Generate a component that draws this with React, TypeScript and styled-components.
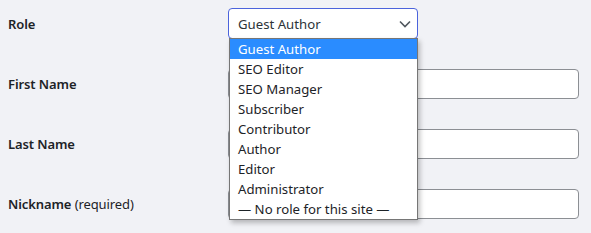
import React from 'react'
import styled, { createGlobalStyle } from 'styled-components'

const GlobalStyle = createGlobalStyle`
  html, body {
    margin: 0;
    padding: 0;
    background: #f1f2f6;
    overflow: hidden;
  }
  body {
    font-family: 'Noto Sans', 'Liberation Sans', sans-serif;
    color: #1d2327;
  }
`

const Page = styled.div`
  width: 591px;
  height: 233px;
  overflow: hidden;
`

const FormTable = styled.div`
  margin-top: -6px;
  padding-left: 8px;
  display: flex;
  flex-direction: column;
`

const Row = styled.div`
  display: grid;
  grid-template-columns: 220px 351px;
  align-items: center;
  height: 60px;
`

const Label = styled.label`
  font-size: 13px;
  font-weight: 600;
  color: #1d2327;
  letter-spacing: -0.1px;
`

const Hint = styled.span`
  font-weight: 400;
`

const SelectWrap = styled.div`
  position: relative;
  width: 190px;
  z-index: 2;
  align-self: start;
  margin-top: 14px;
`

const SelectBox = styled.div`
  height: 31px;
  box-sizing: border-box;
  border: 1.5px solid #4b63dc;
  border-radius: 4px;
  background: #fff;
  display: flex;
  align-items: center;
  justify-content: space-between;
  padding: 0 7px 0 9px;
  font-size: 13.2px;
  color: #2c3338;
`

const Chevron = styled.svg`
  width: 12px;
  height: 8px;
  margin-right: -1px;
`

const Menu = styled.ul`
  position: absolute;
  top: 30px;
  left: 1px;
  width: 189px;
  box-sizing: border-box;
  margin: 0;
  padding: 0;
  list-style: none;
  background: #fff;
  border: 1px solid #767676;
  box-shadow: 2px 3px 5px rgba(0, 0, 0, 0.25);
`

const Option = styled.li<{ $active?: boolean }>`
  height: 20px;
  line-height: 20px;
  padding-left: 8px;
  font-size: 13.2px;
  color: ${p => (p.$active ? '#fff' : '#1d2327')};
  background: ${p => (p.$active ? '#2a8cff' : 'transparent')};
  white-space: nowrap;
`

const TextInput = styled.input`
  width: 351px;
  height: 30px;
  box-sizing: border-box;
  border: 1px solid #8c8f94;
  border-radius: 4px;
  background: #fff;
  margin: 0;
  padding: 0 8px;
`

const roles = [
  'Guest Author',
  'SEO Editor',
  'SEO Manager',
  'Subscriber',
  'Contributor',
  'Author',
  'Editor',
  'Administrator',
  '— No role for this site —',
]

const App: React.FC = () => {
  return (
    <Page>
      <GlobalStyle />
      <FormTable>
        <Row>
          <Label>Role</Label>
          <SelectWrap>
            <SelectBox>
              <span>Guest Author</span>
              <Chevron viewBox='0 0 12 8'>
                <path d='M1 1.5 L6 6.5 L11 1.5' fill='none' stroke='#50575e' strokeWidth='1.6' />
              </Chevron>
            </SelectBox>
            <Menu>
              {roles.map((r, i) => (
                <Option key={r} $active={i === 0}>
                  {r}
                </Option>
              ))}
            </Menu>
          </SelectWrap>
        </Row>
        <Row>
          <Label>First Name</Label>
          <TextInput />
        </Row>
        <Row>
          <Label>Last Name</Label>
          <TextInput />
        </Row>
        <Row>
          <Label>
            Nickname <Hint>(required)</Hint>
          </Label>
          <TextInput />
        </Row>
      </FormTable>
    </Page>
  )
}

export default App
